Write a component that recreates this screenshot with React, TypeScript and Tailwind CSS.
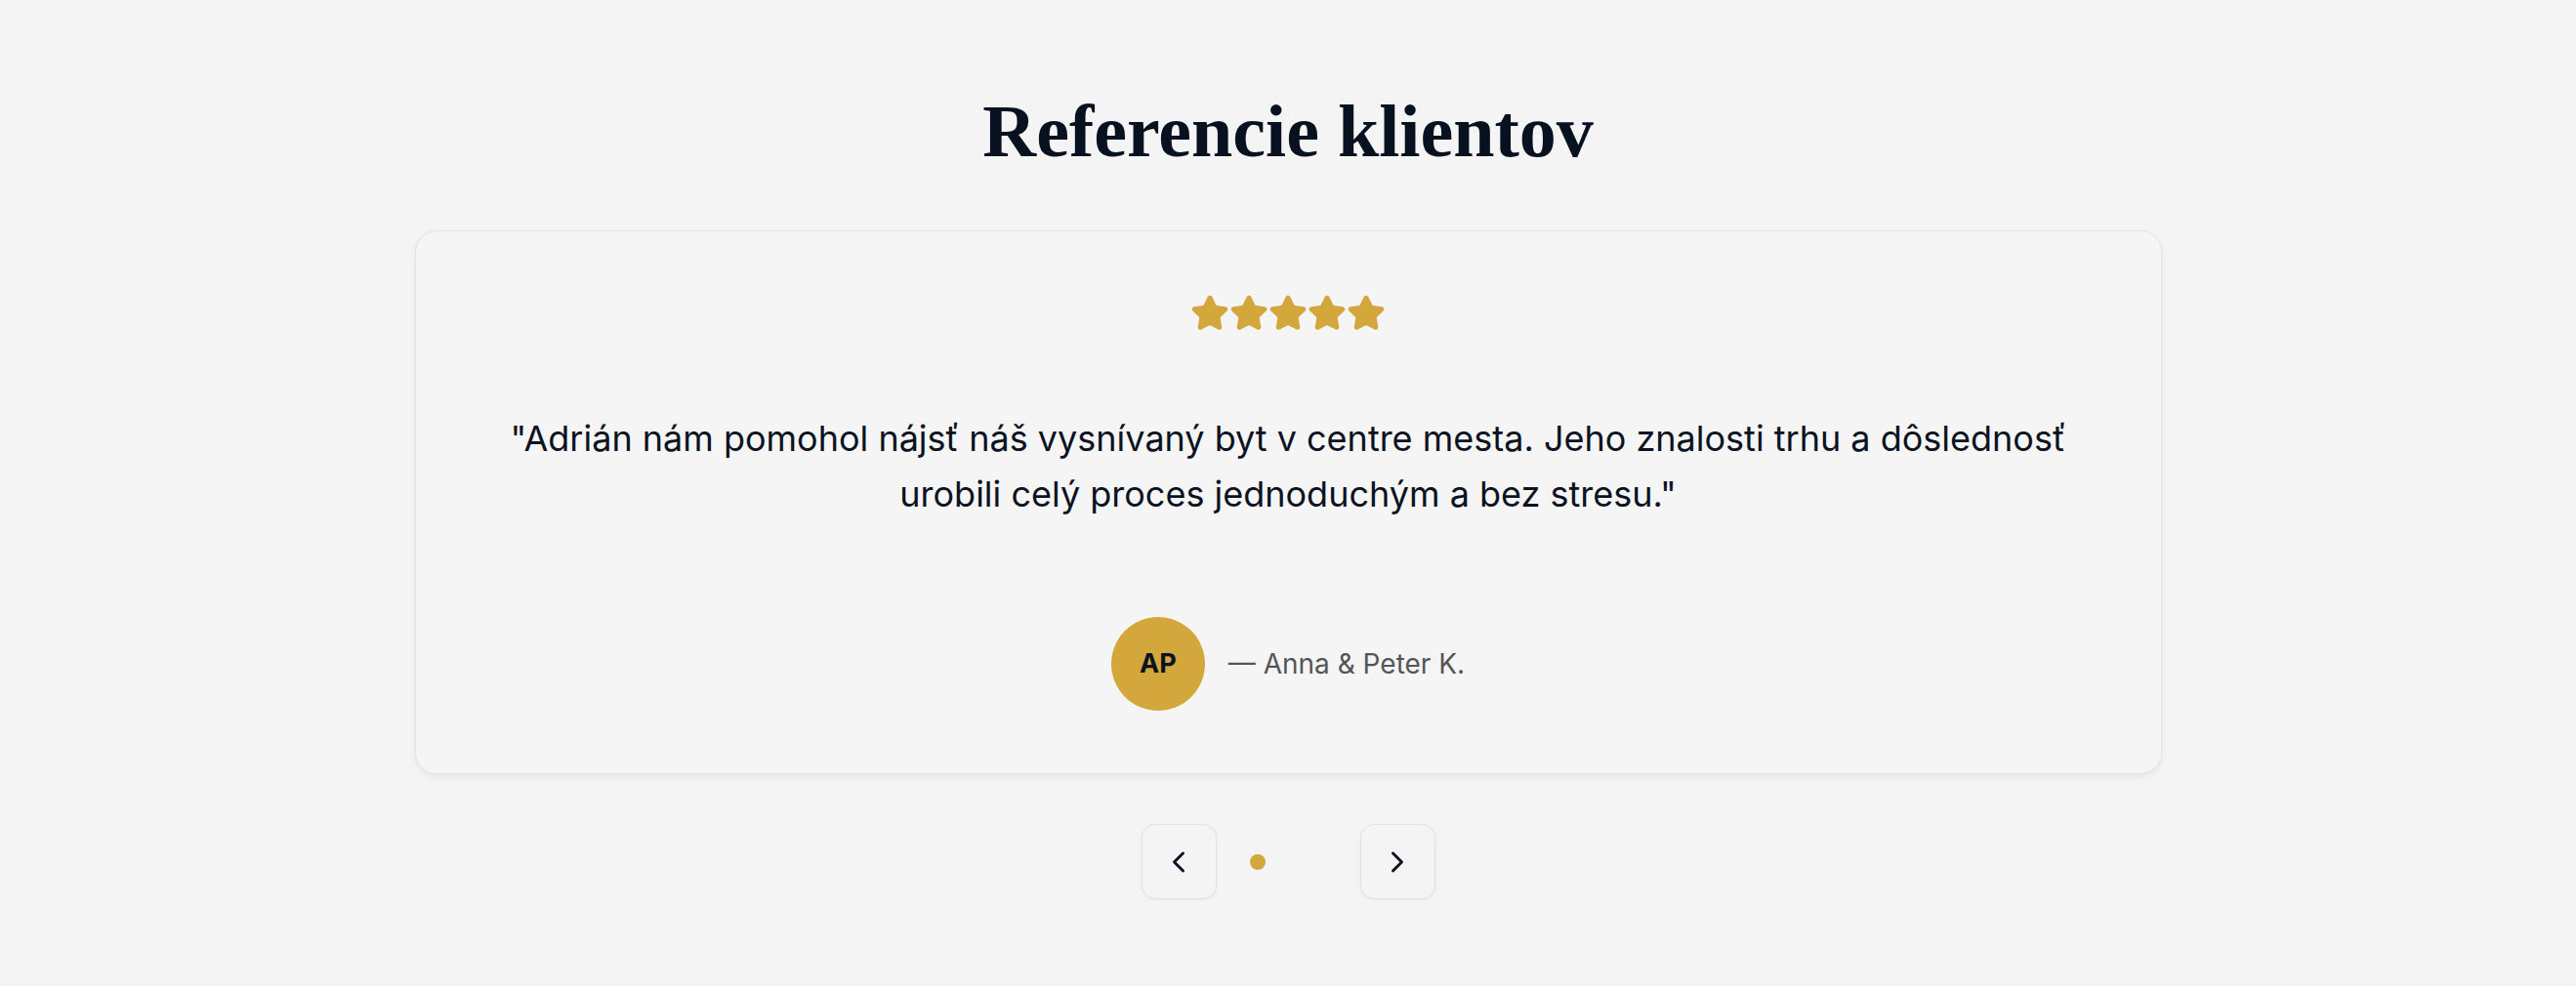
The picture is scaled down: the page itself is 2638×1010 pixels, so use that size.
import React from 'react';
import { Star, ChevronLeft, ChevronRight } from 'lucide-react';

const testimonial = {
  text: '"Adrián nám pomohol nájsť náš vysnívaný byt v centre mesta. Jeho znalosti trhu a dôslednosť urobili celý proces jednoduchým a bez stresu."',
  author: 'Anna & Peter K.',
  initials: 'AP',
  rating: 5,
};

export default function App() {
  return (
    <div className="min-h-[1010px] w-full bg-[#f4f4f4] font-['Inter',sans-serif]">
      <section className="flex flex-col items-center pt-[96px]">
        <h2 className="font-['Liberation_Serif',serif] text-[76px] font-bold leading-none text-[#07111f]">
          Referencie klientov
        </h2>

        <div className="mt-[64px] w-[1789px] rounded-[22px] border border-[#e3e3e3] bg-[#f5f5f5] p-[64px] shadow-[0_3px_6px_rgba(0,0,0,0.06)]">
          <div className="flex justify-center">
            {Array.from({ length: testimonial.rating }).map((_, i) => (
              <Star key={i} size={40} className="fill-[#d3a73c] text-[#d3a73c]" />
            ))}
          </div>

          <p className="mt-[80px] text-center text-[36px] leading-[57px] text-[#0b1322]">
            {testimonial.text}
          </p>

          <div className="mt-[97px] flex items-center justify-center gap-[24px]">
            <div className="flex h-[96px] w-[96px] items-center justify-center rounded-full bg-[#d3a73c] text-[27px] font-bold text-[#0b1322]">
              {testimonial.initials}
            </div>
            <span className="text-[28px] text-[#555555]">— {testimonial.author}</span>
          </div>
        </div>

        <div className="mt-[51px] flex items-center">
          <button className="flex h-[77px] w-[77px] items-center justify-center rounded-[14px] border border-[#e2e2e2] bg-[#f4f4f4] text-[#0b1322] shadow-[0_1px_3px_rgba(0,0,0,0.06)]">
            <ChevronLeft size={36} strokeWidth={2} />
          </button>
          <div className="ml-[34px] mr-[97px] h-[16px] w-[16px] rounded-full bg-[#d3a73c]" />
          <button className="flex h-[77px] w-[77px] items-center justify-center rounded-[14px] border border-[#e2e2e2] bg-[#f4f4f4] text-[#0b1322] shadow-[0_1px_3px_rgba(0,0,0,0.06)]">
            <ChevronRight size={36} strokeWidth={2} />
          </button>
        </div>
      </section>
    </div>
  );
}
